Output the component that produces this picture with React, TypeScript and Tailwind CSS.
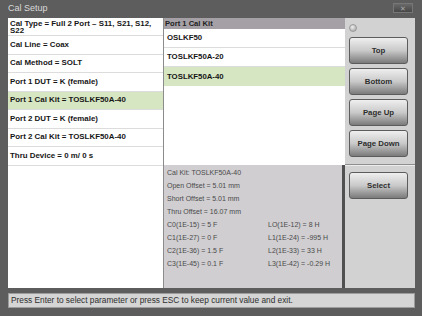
import React from 'react';

const params = [
    'Cal Line = Coax',
    'Cal Method = SOLT',
    'Port 1 DUT = K (female)',
    'Port 1 Cal Kit = TOSLKF50A-40',
    'Port 2 DUT = K (female)',
    'Port 2 Cal Kit = TOSLKF50A-40',
    'Thru Device = 0 m/ 0 s',
];

const kits = ['OSLKF50', 'TOSLKF50A-20', 'TOSLKF50A-40'];

const coeffs = [
    ['C0(1E-15) = 5 F', 'LO(1E-12) = 8 H'],
    ['C1(1E-27) = 0 F', 'L1(1E-24) = -995 H'],
    ['C2(1E-36) = 1.5 F', 'L2(1E-33) = 33 H'],
    ['C3(1E-45) = 0.1 F', 'L3(1E-42) = -0.29 H'],
];

const Button: React.FC<{ label: string }> = ({ label }) => (
    <div className="flex h-[27px] w-[59px] items-center justify-center rounded-[3px] border border-[#5c5c5c] bg-linear-to-b from-[#efefef] via-[#c9c9c9] to-[#7b7b7b] text-[7.8px] font-bold text-[#2e2e2e]">
        {label}
    </div>
);

export default function App() {
    return (
        <div className="flex h-[316px] w-[422px] flex-col bg-[#5d5d5d] font-['Liberation_Sans',Arial,sans-serif]">
            {/* title bar */}
            <div className="flex h-[18px] items-center justify-between pl-[8px] pr-[9px]">
                <span className="text-[9px] text-[#dadada]">Cal Setup</span>
                <div className="mb-[2px] flex h-[10px] w-[20px] items-center justify-center border border-[#777] bg-linear-to-b from-[#6a6a6a] to-[#474747] text-[7px] leading-none text-[#a8a8a8]">
                    ✕
                </div>
            </div>

            <div className="flex h-[270px] pl-[8px] pr-[7px]">
                {/* parameter list */}
                <div className="flex w-[155px] flex-col bg-white text-[7.9px] font-bold text-[#161616]">
                    <div className="flex h-[18px] items-center border-b border-[#dcdcdc] pl-[2px] pr-[2px] leading-[7px]">
                        Cal Type = Full 2 Port – S11, S21, S12, S22
                    </div>
                    {params.map((p, i) => (
                        <div
                            key={p}
                            className={
                                'flex h-[18.5px] items-center border-b border-[#dcdcdc] pl-[2px] ' +
                                (i === 3 ? 'bg-[#d6e6c3]' : '')
                            }
                        >
                            {p}
                        </div>
                    ))}
                </div>

                {/* cal kit list + details */}
                <div className="flex w-[182px] flex-col border-l border-[#8c8c8c] bg-white">
                    <div className="flex h-[11px] items-center bg-[#a5a0a6] pl-[1px] text-[7.6px] font-bold text-[#222]">
                        Port 1 Cal Kit
                    </div>
                    {kits.map((k, i) => (
                        <div
                            key={k}
                            className={
                                'flex h-[19px] items-center pl-[3px] text-[7.8px] font-bold text-[#161616] ' +
                                (i === 2 ? 'bg-[#d6e6c3]' : 'border-b border-[#dcdcdc]')
                            }
                        >
                            {k}
                        </div>
                    ))}
                    <div className="flex-1" />
                    <div className="flex h-[123px] flex-col border-r-[3px] border-[#505050] bg-[#d0ced1] pl-[3px] pt-[1px] text-[7px] leading-[13px] text-[#4a4a4a]">
                        <div>Cal Kit: TOSLKF50A-40</div>
                        <div>Open Offset = 5.01 mm</div>
                        <div>Short Offset = 5.01 mm</div>
                        <div>Thru Offset = 16.07 mm</div>
                        {coeffs.map(([c, l]) => (
                            <div key={c} className="grid grid-cols-[101px_1fr]">
                                <span>{c}</span>
                                <span>{l}</span>
                            </div>
                        ))}
                    </div>
                </div>

                {/* buttons */}
                <div className="flex w-[70px] flex-col bg-[#d2d2d2] pl-[4px] pt-[6px]">
                    <div className="h-[8px] w-[8px] rounded-full border border-[#9a9a9a] bg-[radial-gradient(circle_at_40%_35%,#eeeeee,#9c9c9c)]" />
                    <div className="mt-[5px] flex flex-col gap-[4px]">
                        <Button label="Top" />
                        <Button label="Bottom" />
                        <Button label="Page Up" />
                        <Button label="Page Down" />
                    </div>
                    <div className="-ml-[4px] mt-[7px] h-[2px] border-t border-b border-t-[#8e8e8e] border-b-[#ececec]" />
                    <div className="mt-[6px]">
                        <Button label="Select" />
                    </div>
                </div>
            </div>

            {/* status bar */}
            <div className="mx-[8px] mr-[7px] mt-[5px] flex h-[15px] items-center border border-[#9c9c9c] bg-[#d5d5d5] pl-[2px] text-[8.3px] text-[#2e2e2e]">
                Press Enter to select parameter or press ESC to keep current value and exit.
            </div>
        </div>
    );
}
